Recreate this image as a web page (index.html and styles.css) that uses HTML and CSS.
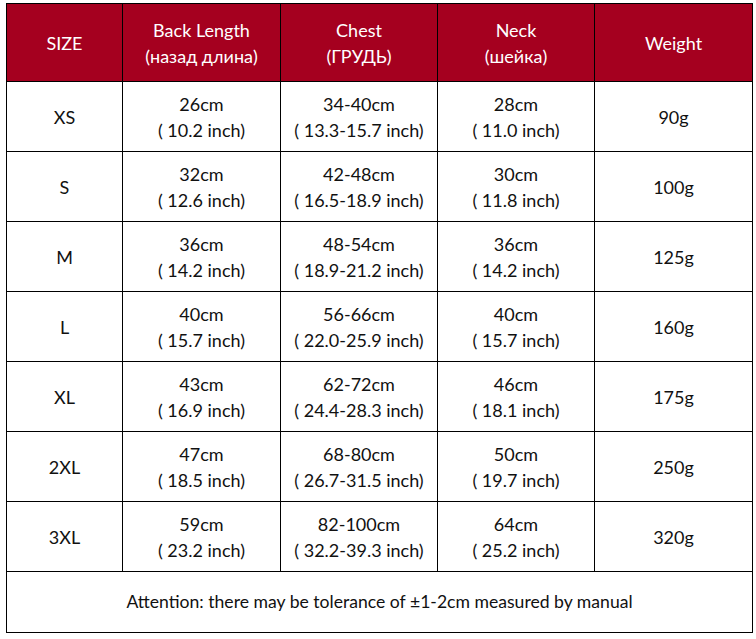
FILE: index.html
```html
<!DOCTYPE html>
<html>
<head>
<meta charset="utf-8">
<link rel="stylesheet" href="styles.css">
</head>
<body>
<table class="size-table">
  <colgroup>
    <col class="c1"><col class="c2"><col class="c3"><col class="c4"><col class="c5">
  </colgroup>
  <thead>
    <tr class="head">
      <th>SIZE</th>
      <th>Back Length<br>(назад длина)</th>
      <th>Chest<br>(ГРУДЬ)</th>
      <th>Neck<br>(шейка)</th>
      <th>Weight</th>
    </tr>
  </thead>
  <tbody>
    <tr><td>XS</td><td>26cm<br>( 10.2 inch)</td><td>34-40cm<br>( 13.3-15.7 inch)</td><td>28cm<br>( 11.0 inch)</td><td>90g</td></tr>
    <tr><td>S</td><td>32cm<br>( 12.6 inch)</td><td>42-48cm<br>( 16.5-18.9 inch)</td><td>30cm<br>( 11.8 inch)</td><td>100g</td></tr>
    <tr><td>M</td><td>36cm<br>( 14.2 inch)</td><td>48-54cm<br>( 18.9-21.2 inch)</td><td>36cm<br>( 14.2 inch)</td><td>125g</td></tr>
    <tr><td>L</td><td>40cm<br>( 15.7 inch)</td><td>56-66cm<br>( 22.0-25.9 inch)</td><td>40cm<br>( 15.7 inch)</td><td>160g</td></tr>
    <tr><td>XL</td><td>43cm<br>( 16.9 inch)</td><td>62-72cm<br>( 24.4-28.3 inch)</td><td>46cm<br>( 18.1 inch)</td><td>175g</td></tr>
    <tr><td>2XL</td><td>47cm<br>( 18.5 inch)</td><td>68-80cm<br>( 26.7-31.5 inch)</td><td>50cm<br>( 19.7 inch)</td><td>250g</td></tr>
    <tr><td>3XL</td><td>59cm<br>( 23.2 inch)</td><td>82-100cm<br>( 32.2-39.3 inch)</td><td>64cm<br>( 25.2 inch)</td><td>320g</td></tr>
    <tr class="foot"><td colspan="5">Attention: there may be tolerance of ±1-2cm measured by manual</td></tr>
  </tbody>
</table>
</body>
</html>
```
FILE: styles.css
```css
html, body {
  margin: 0;
  padding: 0;
  background: #fff;
}
body {
  padding: 3px 0 0 6px;
  font-family: Lato, "Open Sans", sans-serif;
  color: #111;
}
.size-table {
  border-collapse: collapse;
  table-layout: fixed;
  width: 746px;
}
.c1 { width: 116px; }
.c2 { width: 158px; }
.c3 { width: 157px; }
.c4 { width: 157px; }
.c5 { width: 158px; }
.size-table th,
.size-table td {
  border: 1px solid #000;
  text-align: center;
  vertical-align: middle;
  padding: 0;
  font-size: 18px;
  line-height: 26px;
  font-weight: normal;
}
.head th {
  background: #a5001f;
  color: #fff;
  height: 77px;
}
tbody tr td {
  height: 69px;
  padding-top: 2px;
}
.size-table .foot td {
  height: 60px;
  padding-top: 0;
  font-size: 17.6px;
}
```
